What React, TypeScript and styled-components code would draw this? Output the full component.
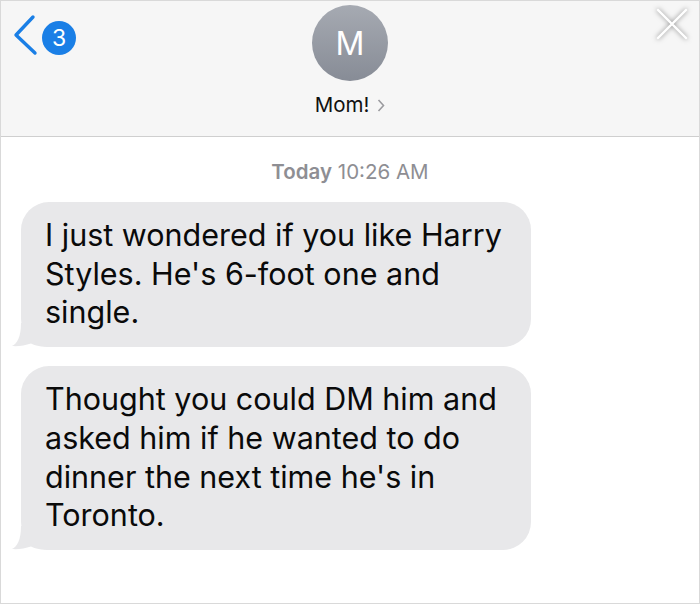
import React from "react";
import styled, { createGlobalStyle } from "styled-components";

const Global = createGlobalStyle`
  html, body { margin: 0; padding: 0; background: #ffffff; }
  body { font-family: Inter, "Liberation Sans", sans-serif; }
  * { box-sizing: border-box; }
`;

const Frame = styled.div`
  width: 700px;
  height: 604px;
  border: 1px solid #d9d9d9;
  background: #ffffff;
  overflow: hidden;
  display: flex;
  flex-direction: column;
`;

const Header = styled.header`
  height: 136px;
  flex: none;
  background: #f6f6f6;
  border-bottom: 1px solid #cfcfcf;
  display: grid;
  grid-template-columns: 1fr auto 1fr;
  align-items: start;
`;

const BackButton = styled.div`
  display: flex;
  align-items: flex-start;
  padding: 13px 0 0 12px;
`;

const Badge = styled.div`
  width: 34px;
  height: 34px;
  border-radius: 50%;
  margin: 7px 0 0 3px;
  background: #1a7fe6;
  color: #ffffff;
  font-size: 23px;
  font-weight: 400;
  display: flex;
  align-items: center;
  justify-content: center;
`;

const Contact = styled.div`
  display: flex;
  flex-direction: column;
  align-items: center;
  padding-top: 4px;
`;

const Avatar = styled.div`
  width: 76px;
  height: 76px;
  border-radius: 50%;
  background: linear-gradient(#a6aab2, #878c96);
  color: #ffffff;
  font-size: 32px;
  font-weight: 400;
  display: flex;
  align-items: center;
  justify-content: center;
`;

const Name = styled.div`
  margin-top: 12px;
  display: flex;
  align-items: center;
  gap: 8px;
  font-size: 20.5px;
  line-height: 24px;
  color: #111111;
`;

const CloseWrap = styled.div`
  justify-self: end;
  padding: 6px 10px 0 0;
`;

const Body = styled.main`
  display: flex;
  flex-direction: column;
  padding: 23px 0 0 20px;
`;

const Stamp = styled.div`
  align-self: center;
  margin-left: -20px;
  font-size: 20.5px;
  line-height: 24px;
  color: #8e8e93;
  margin-bottom: 18px;
  b { font-weight: 600; }
`;

const Messages = styled.div`
  display: flex;
  flex-direction: column;
  gap: 19px;
`;

const Bubble = styled.div`
  position: relative;
  width: 510px;
  background: #e8e8ea;
  border-radius: 28px;
  padding: 14px 20px 15px 24px;
  font-size: 30.5px;
  line-height: 38.7px;
  color: #0a0a0a;
  white-space: nowrap;
`;

const Tail = styled.svg`
  position: absolute;
  left: -10px;
  bottom: -1px;
`;

const BubbleTail = () => (
  <Tail width="42" height="27" viewBox="0 0 42 27">
    <path d="M10 2 C10 16 6 23 1 25 C7 25.5 14 24.5 20 22.5 C24 24.5 30 26 40 26 L40 2 Z" fill="#e8e8ea" />
  </Tail>
);

const messages = [
  ["I just wondered if you like Harry", "Styles. He's 6-foot one and", "single."],
  ["Thought you could DM him and", "asked him if he wanted to do", "dinner the next time he's in", "Toronto."],
];

export default function App() {
  return (
    <>
      <Global />
      <Frame>
        <Header>
          <BackButton>
            <svg width="26" height="42" viewBox="0 0 26 42">
              <polyline points="20,3 3,21 22,39" fill="none" stroke="#1a7fe6" strokeWidth="3.4" strokeLinecap="round" strokeLinejoin="round" />
            </svg>
            <Badge>3</Badge>
          </BackButton>
          <Contact>
            <Avatar>M</Avatar>
            <Name>
              Mom!
              <svg width="8" height="13" viewBox="0 0 8 13">
                <polyline points="1.5,1 6.5,6.5 1.5,12" fill="none" stroke="#9b9b9f" strokeWidth="1.6" />
              </svg>
            </Name>
          </Contact>
          <CloseWrap>
            <svg width="34" height="34" viewBox="0 0 34 34" style={{ filter: "drop-shadow(0 0 2.5px rgba(0,0,0,0.5))" }}>
              <path d="M3 3 L31 31 M31 3 L3 31" stroke="#ffffff" strokeWidth="2.4" strokeLinecap="round" />
            </svg>
          </CloseWrap>
        </Header>
        <Body>
          <Stamp>
            <b>Today</b> 10:26 AM
          </Stamp>
          <Messages>
            {messages.map((lines, i) => (
              <Bubble key={i}>
                {lines.map((l, j) => (
                  <React.Fragment key={j}>
                    {l}
                    {j < lines.length - 1 && <br />}
                  </React.Fragment>
                ))}
                <BubbleTail />
              </Bubble>
            ))}
          </Messages>
        </Body>
      </Frame>
    </>
  );
}
